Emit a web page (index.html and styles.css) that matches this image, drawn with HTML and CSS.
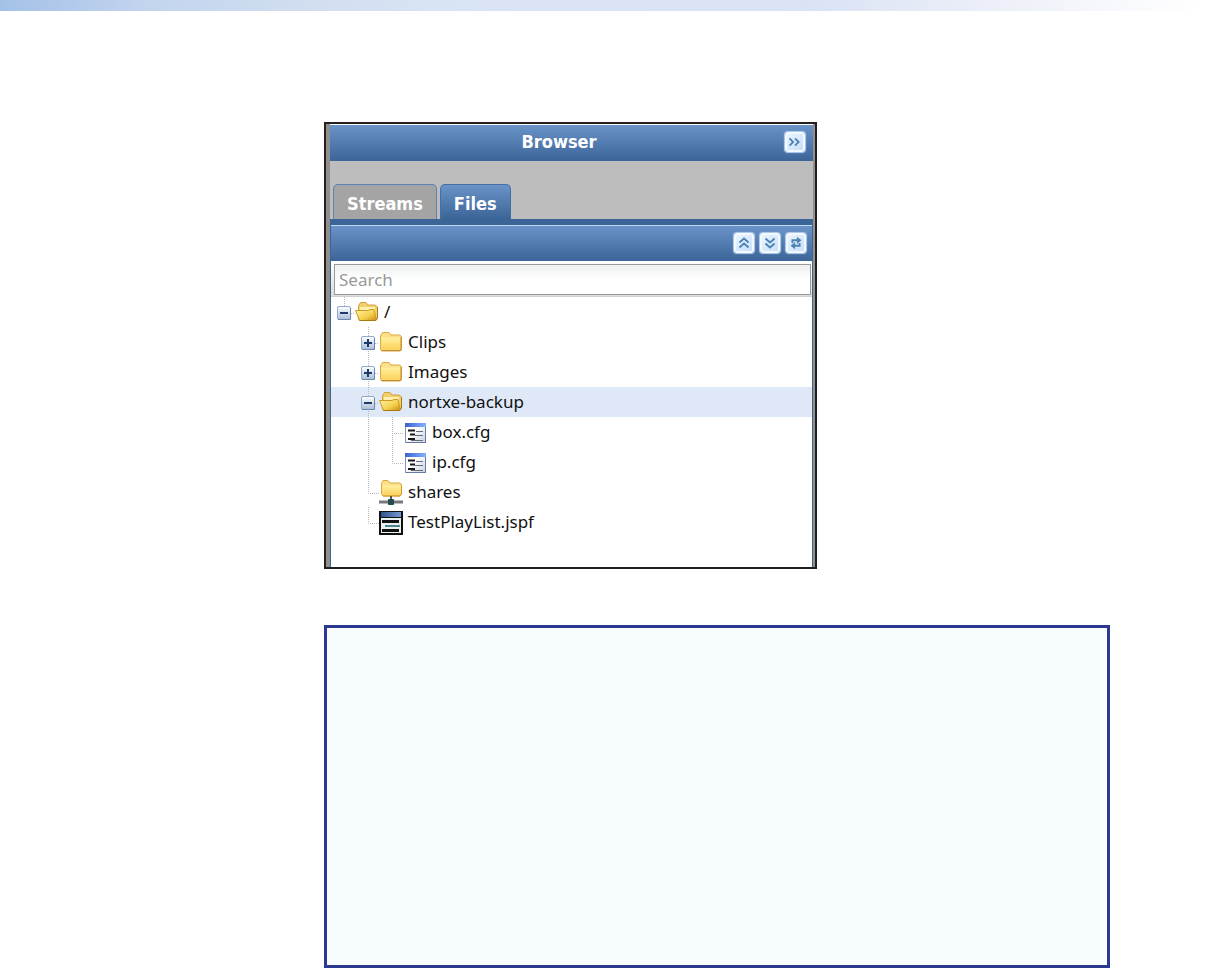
FILE: index.html
```
<!DOCTYPE html>
<html lang="en">
<head>
  <meta charset="UTF-8">
  <meta name="viewport" content="width=device-width, initial-scale=1.0">
  <title>Browser</title>
  <link rel="stylesheet" href="styles.css">
</head>
<body>
  <svg class="sprite" aria-hidden="true">
    <defs>
      <linearGradient id="yellow" x1="0" y1="0" x2="0" y2="1">
        <stop offset="0" stop-color="#fff0a0"/>
        <stop offset="1" stop-color="#fbd25a"/>
      </linearGradient>
      <linearGradient id="gold" x1="0" y1="0" x2="1" y2="1">
        <stop offset="0" stop-color="#fff3a6"/>
        <stop offset="0.6" stop-color="#f3cf4c"/>
        <stop offset="1" stop-color="#c98f14"/>
      </linearGradient>
      <linearGradient id="steel" x1="0" y1="0" x2="0" y2="1">
        <stop offset="0" stop-color="#ffffff"/>
        <stop offset="1" stop-color="#a9bdd8"/>
      </linearGradient>
      <linearGradient id="page" x1="0" y1="0" x2="1" y2="1">
        <stop offset="0.4" stop-color="#ffffff"/>
        <stop offset="1" stop-color="#c3d2e6"/>
      </linearGradient>
      <linearGradient id="title" x1="0" y1="0" x2="1" y2="0">
        <stop offset="0" stop-color="#3a62d0"/>
        <stop offset="1" stop-color="#86b0ff"/>
      </linearGradient>
      <linearGradient id="navy" x1="0" y1="0" x2="1" y2="0">
        <stop offset="0" stop-color="#2b4f8f"/>
        <stop offset="1" stop-color="#7d9ed2"/>
      </linearGradient>
    </defs>

    <!-- tree lines and toggles -->
    <symbol id="line" viewBox="0 0 24 30">
      <path class="dots" d="M12.5 0V30"/>
    </symbol>
    <symbol id="elbow" viewBox="0 0 24 30">
      <path class="dots" d="M12.5 0V30M12 16.5H23"/>
    </symbol>
    <symbol id="elbow-end" viewBox="0 0 24 30">
      <path class="dots" d="M12.5 0V16.5H23"/>
    </symbol>
    <symbol id="box" viewBox="0 0 24 30">
      <rect x="5.5" y="9.5" width="13" height="13" rx="1.5" fill="url(#steel)" stroke="#93a9c8"/>
      <path d="M6 22.5H18.5V11" fill="none" stroke="#6d87ad"/>
    </symbol>
    <symbol id="minus-root" viewBox="0 0 24 30">
      <path class="dots" d="M12.5 0V9M19 16.5H23"/>
      <use href="#box" width="24" height="30"/>
      <path d="M8 16H16" stroke="#1e3a66" stroke-width="2"/>
    </symbol>
    <symbol id="minus" viewBox="0 0 24 30">
      <path class="dots" d="M12.5 0V30M19 16.5H23"/>
      <use href="#box" width="24" height="30"/>
      <path d="M8 16H16" stroke="#1e3a66" stroke-width="2"/>
    </symbol>
    <symbol id="plus" viewBox="0 0 24 30">
      <path class="dots" d="M12.5 0V30M19 16.5H23"/>
      <use href="#box" width="24" height="30"/>
      <path d="M8 16H16M12 12V20" stroke="#1e3a66" stroke-width="2"/>
    </symbol>

    <!-- item icons -->
    <symbol id="folder" viewBox="0 0 24 30">
      <path d="M1.5 22V9L3.5 5.5H10L12 8H21L22.5 10V22L21 24H3Z" fill="#fbe08a" stroke="#dba83f"/>
      <path d="M2.5 10.5H21.5V22.5H2.5Z" fill="url(#yellow)"/>
      <path d="M2 23.5H22V10" fill="none" stroke="#c08a2c"/>
    </symbol>
    <symbol id="folder-open" viewBox="0 0 24 30">
      <path d="M3.5 21V9L5.5 5.5H11L13 8H20L22.5 10V20L20 23H4Z" fill="#f3cf6c" stroke="#d3a040"/>
      <path d="M5 10H20V15H5Z" fill="#fff0b0"/>
      <path d="M0.500 13.5H13L15 12.5H19L21 22L20 23.5H4.5Z" fill="url(#gold)" stroke="#cf9a22"/>
      <path d="M4.5 23.5H21L22.5 21V10" fill="none" stroke="#a87812"/>
    </symbol>
    <symbol id="config" viewBox="0 0 24 30">
      <rect x="2.5" y="6.5" width="20" height="19" fill="url(#page)" stroke="#7f97bd"/>
      <rect x="2" y="6" width="21" height="4" fill="url(#title)"/>
      <path d="M22.5 10V25.5H3" fill="none" stroke="#667c9f"/>
      <path d="M5 13.5H12M7 17.5H12M5 22H12" stroke="#181818" stroke-width="2"/>
      <path d="M13 14.5H20M12 18.5H20M8 23.5H20" stroke="#6c6c6c"/>
    </symbol>
    <symbol id="share" viewBox="0 0 24 30">
      <path d="M2.5 17V6.5L4 3.5H9L11 6H21L22.5 8V17L21 19H4Z" fill="#fbe08a" stroke="#dba83f"/>
      <path d="M3.5 8.5H21.5V18H3.5Z" fill="url(#yellow)"/>
      <path d="M4 19H21L22.5 17V8" fill="none" stroke="#d49a24"/>
      <path d="M0 25H24" stroke="#75797b" stroke-width="3"/>
      <path d="M12 19V22" stroke="#555" stroke-width="2"/>
      <rect x="9" y="22" width="6" height="6" rx="1" fill="#244b52"/>
    </symbol>
    <symbol id="playlist" viewBox="0 0 24 30">
      <rect x="1" y="5" width="22" height="22" fill="#e9f1f1"/>
      <rect x="1" y="5" width="22" height="5" fill="url(#navy)"/>
      <path d="M0 4.5H24M0 10.500H24" stroke="#111"/>
      <path d="M1 4V28M23 4V28M0 27H24" stroke="#111" stroke-width="2"/>
      <path d="M3 14.5H20M3 23.5H20" stroke="#111" stroke-width="3"/>
      <path d="M6 19H21" stroke="#4c8791" stroke-width="2"/>
    </symbol>
  </svg>

  <div class="banner"></div>

  <main class="content">
    <section class="panel">
      <header class="bar panel-title">
        <h1>Browser</h1>
        <button class="tool" type="button" aria-label="Collapse panel">
          <svg viewBox="0 0 22 22"><path d="M5 7L9 11L5 15M11 7L15 11L11 15"/></svg>
        </button>
      </header>

      <nav class="tabs">
        <button class="tab" type="button">Streams</button>
        <button class="tab active" type="button">Files</button>
      </nav>

      <div class="files">
        <div class="bar toolbar">
          <button class="tool" type="button" aria-label="Collapse all">
            <svg viewBox="0 0 22 22"><path d="M6 10.5L11 6L16 10.5M6 16L11 11.5L16 16"/></svg>
          </button>
          <button class="tool" type="button" aria-label="Expand all">
            <svg viewBox="0 0 22 22"><path d="M6 6L11 10.5L16 6M6 11.5L11 16L16 11.5"/></svg>
          </button>
          <button class="tool" type="button" aria-label="Refresh">
            <svg viewBox="0 0 22 22"><path d="M7 11V8H13M15 11V14H9"/><path class="solid" d="M12 4L17 8L12 12ZM10 10L5 14L10 18Z"/></svg>
          </button>
        </div>

        <div class="search">
          <input type="text" placeholder="Search" aria-label="Search">
        </div>

        <ul class="tree">
          <li>
            <div class="row">
              <button class="toggle" type="button" aria-label="Collapse /"><svg><use href="#minus-root"/></svg></button>
              <svg class="icon"><use href="#folder-open"/></svg>
              <span>/</span>
            </div>
            <ul class="indent">
              <li>
                <div class="row">
                  <button class="toggle" type="button" aria-label="Expand Clips"><svg><use href="#plus"/></svg></button>
                  <svg class="icon"><use href="#folder"/></svg>
                  <span>Clips</span>
                </div>
              </li>
              <li>
                <div class="row">
                  <button class="toggle" type="button" aria-label="Expand Images"><svg><use href="#plus"/></svg></button>
                  <svg class="icon"><use href="#folder"/></svg>
                  <span>Images</span>
                </div>
              </li>
              <li>
                <div class="row selected">
                  <button class="toggle" type="button" aria-label="Collapse nortxe-backup"><svg><use href="#minus"/></svg></button>
                  <svg class="icon"><use href="#folder-open"/></svg>
                  <span>nortxe-backup</span>
                </div>
                <ul>
                  <li>
                    <div class="row">
                      <svg><use href="#line"/></svg>
                      <svg><use href="#elbow"/></svg>
                      <svg class="icon"><use href="#config"/></svg>
                      <span>box.cfg</span>
                    </div>
                  </li>
                  <li>
                    <div class="row">
                      <svg><use href="#line"/></svg>
                      <svg><use href="#elbow-end"/></svg>
                      <svg class="icon"><use href="#config"/></svg>
                      <span>ip.cfg</span>
                    </div>
                  </li>
                </ul>
              </li>
              <li>
                <div class="row">
                  <svg><use href="#elbow-end"/></svg>
                  <svg class="icon"><use href="#share"/></svg>
                  <span>shares</span>
                </div>
              </li>
              <li>
                <div class="row">
                  <svg><use href="#elbow-end"/></svg>
                  <svg class="icon"><use href="#playlist"/></svg>
                  <span>TestPlayList.jspf</span>
                </div>
              </li>
            </ul>
          </li>
        </ul>
      </div>
    </section>

    <aside class="note"></aside>
  </main>
</body>
</html>
```
FILE: styles.css
```
* {
  margin: 0;
  padding: 0;
  box-sizing: border-box;
}

body {
  display: flex;
  flex-direction: column;
  min-height: 100vh;
  background: #fff;
  color: #111;
  font-family: Tahoma, 'Noto Sans', sans-serif;
  font-size: 17px;
}

button,
input {
  font: inherit;
  border: none;
}

ul {
  list-style: none;
}

.sprite {
  position: absolute;
  width: 0;
  height: 0;
}

.banner {
  height: 11px;
  background: linear-gradient(90deg, #a3c1e8, #c3d4ee 12%, #d4e0f1 28%, #dae4f4 40%, #d9e3f4 66%, #ebeef8 80%, #fff 98%);
}

.content {
  flex: 1;
  display: flex;
  flex-direction: column;
  gap: 56px;
  padding: 111px 114px 0 324px;
}

/* browser panel */
.panel {
  max-width: 493px;
  border: 2px solid #231f20;
  background: linear-gradient(90deg, #918f8e 50%, #93918b 50%);
  padding: 0 2px 0 4px;
}

.bar {
  display: flex;
  align-items: center;
  padding-bottom: 2px;
  background: linear-gradient(#6a93c9, #3b6497);
}

.panel-title {
  height: 37px;
  padding-left: 31px;
  padding-right: 8px;
  border-top: 1px solid #fff;
}

h1 {
  flex: 1;
  padding-right: 28px;
  text-align: center;
  color: #fff;
  font-family: Tahoma, 'DejaVu Sans Condensed', sans-serif;
  font-size: 18px;
  line-height: 24px;
}

.tool {
  width: 20px;
  height: 20px;
  border: 2px solid #f4f9ff;
  border-radius: 3px;
  background: linear-gradient(135deg, #eaf5ff, #c7e0fb);
  box-shadow: 0 0 1px 1px #b4d0f2;
  cursor: pointer;
}

.tool svg {
  display: block;
  width: 20px;
  height: 20px;
  margin: -2px;
  fill: none;
  stroke: #4f81b3;
  stroke-width: 2;
}

.tool .solid {
  fill: #4f81b3;
  stroke: none;
}

.tabs {
  display: flex;
  align-items: flex-end;
  gap: 3px;
  height: 64px;
  padding: 0 3px;
  background: #bdbdbd;
  border-bottom: 6px solid #3b6497;
}

.tab {
  height: 35px;
  padding: 3px 13px 0;
  border: 1px solid #5d82b3;
  border-bottom: none;
  border-radius: 5px 5px 0 0;
  background: #a4a4a4;
  color: #fff;
  font-family: Tahoma, 'DejaVu Sans Condensed', sans-serif;
  font-size: 18px;
  font-weight: bold;
  cursor: pointer;
}

.tab.active {
  border-color: #436fa6;
  background: linear-gradient(#6a93c9, #3b6497);
}

.files {
  min-height: 342px;
  border: solid #3b6497;
  border-width: 0 1px;
  background: #fff;
}

.toolbar {
  justify-content: flex-end;
  gap: 6px;
  height: 37px;
  padding-right: 6px;
  border-top: 1px solid #c3d8f0;
  border-bottom: 1px solid #fff;
}

.search {
  height: 35px;
  padding: 2px 1px 2px 3px;
  background: linear-gradient(#fff, #ddd);
  border-bottom: 1px solid #d0d0d0;
}

.search input {
  display: block;
  width: 100%;
  height: 31px;
  padding: 0 4px;
  border: 1px solid #999;
  background: linear-gradient(#eef1f1, #fff 50%);
}

.search input::placeholder {
  color: #999;
  opacity: 1;
}

/* file tree */
.row {
  display: flex;
  align-items: center;
  height: 30px;
  padding-left: 1px;
  line-height: 30px;
}

.indent .row {
  padding-left: 25px;
}

.row svg {
  display: block;
  width: 24px;
  height: 30px;
}

.row .icon {
  margin: 0 5px 0 -1px;
}

.row.selected {
  background: #dfe8f6;
}

.toggle {
  background: none;
  cursor: pointer;
}

.dots {
  fill: none;
  stroke: #b8b8b8;
  stroke-width: 1;
  stroke-dasharray: 1 1;
}

/* empty note box */
.note {
  flex: 1;
  min-height: 120px;
  border: 3px solid #2b3990;
  background: #f7fcff;
}
```
